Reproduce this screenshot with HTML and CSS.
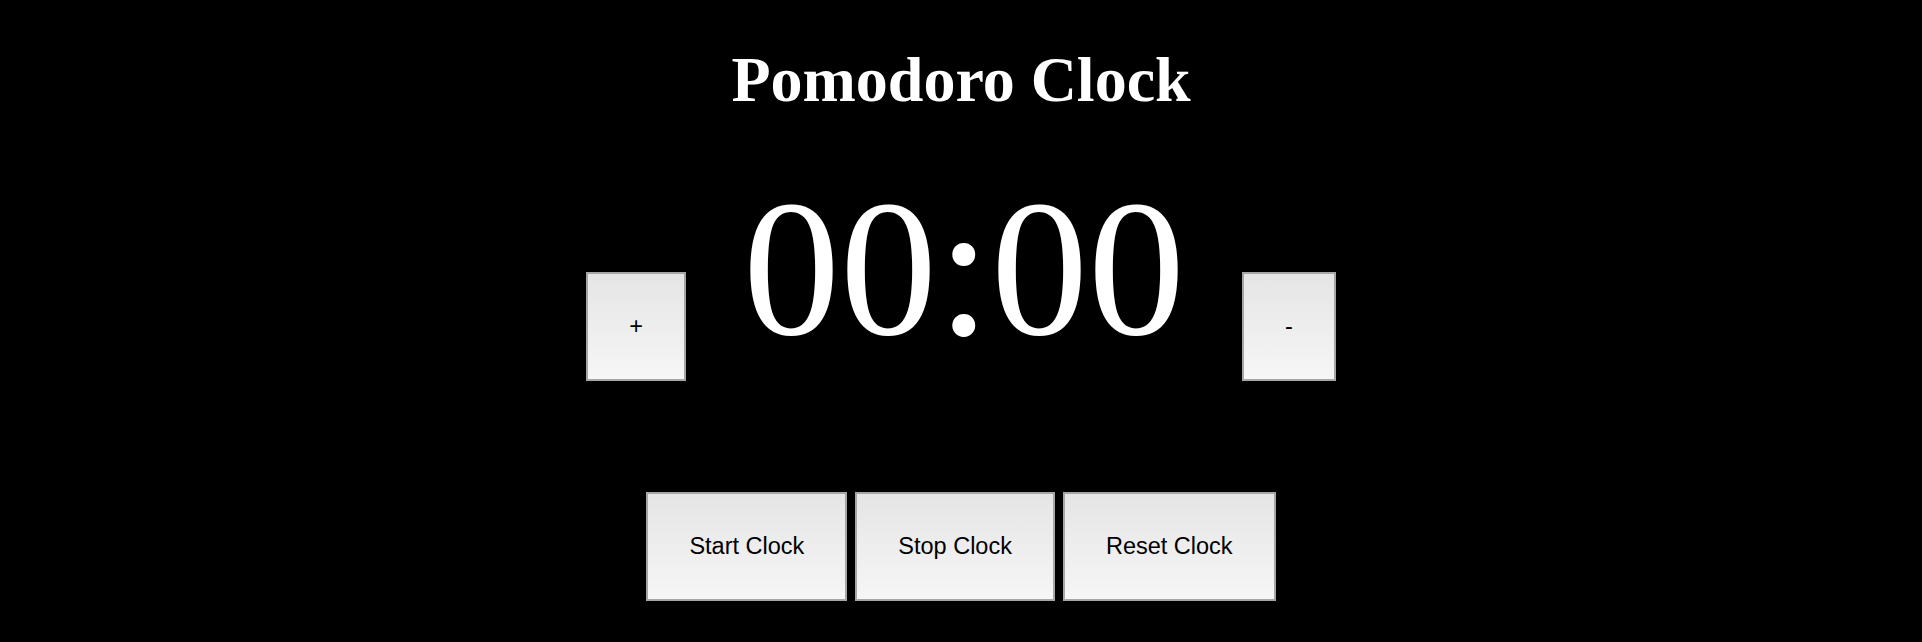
FILE: index.html
```html
<!DOCTYPE html>
<html lang="en">
<head>
<meta charset="utf-8">
<title>Pomodoro Clock</title>
<link rel="stylesheet" href="styles.css">
</head>
<body>
<main class="page">
  <h1 class="title">Pomodoro Clock</h1>
  <div class="timer-row">
    <button class="btn">+</button>
    <span class="timer">00:00</span>
    <button class="btn">-</button>
  </div>
  <div class="controls">
    <button class="btn">Start Clock</button>
    <button class="btn">Stop Clock</button>
    <button class="btn">Reset Clock</button>
  </div>
</main>
</body>
</html>
```
FILE: styles.css
```css
html, body {
  margin: 0;
  padding: 0;
  background: #000;
}
body {
  color: #fff;
  font-family: "Liberation Serif", "Times New Roman", serif;
  min-height: 642px;
}
.page {
  padding-top: 43px;
  text-align: center;
}
.title {
  margin: 0;
  font-size: 64px;
  line-height: 74px;
  font-weight: bold;
}
.timer-row {
  margin-top: 37px;
  display: flex;
  justify-content: center;
  align-items: baseline;
  gap: 57px;
}
.timer {
  font-size: 194px;
  line-height: 230px;
  font-weight: normal;
}
.btn {
  font-family: "Liberation Sans", Arial, sans-serif;
  font-size: 23.5px;
  line-height: 25px;
  color: #000;
  padding: 40px 41px;
  border: 2px solid #a6a6a6;
  border-radius: 0;
  background: linear-gradient(#e5e5e5, #f6f6f6);
  margin: 0;
}
.controls {
  margin-top: 108px;
  display: flex;
  justify-content: center;
  gap: 8px;
}
```
